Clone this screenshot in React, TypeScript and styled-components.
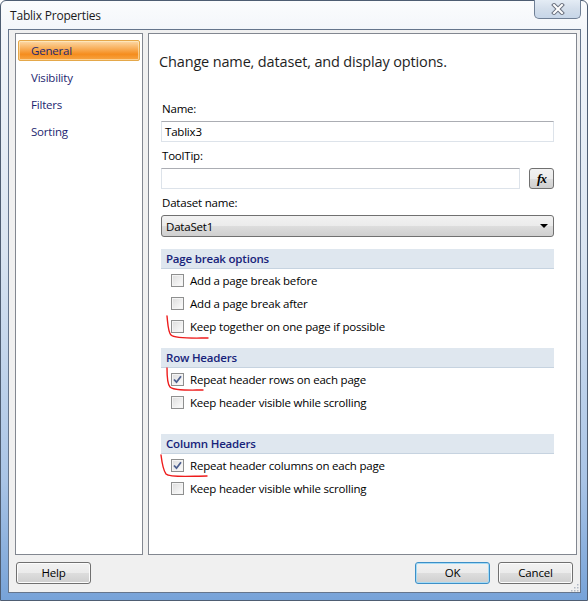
import { createGlobalStyle } from "styled-components";
import styled from "styled-components";

const GlobalStyle = createGlobalStyle`
    html, body {
        margin: 0;
        padding: 0;
        background: #ffffff;
    }
    * {
        box-sizing: border-box;
    }
`;

const UI_FONT = `"Open Sans", "Noto Sans", "Liberation Sans", sans-serif`;

const Window = styled.div`
    position: relative;
    width: 588px;
    height: 601px;
    display: flex;
    flex-direction: column;
    font-family: ${UI_FONT};
    font-size: 11.5px;
    letter-spacing: -0.2px;
    color: #000;
    border: 1px solid #4e5d72;
    border-radius: 6px 6px 0 0;
    background: linear-gradient(
        180deg,
        #fbfcfd 0px,
        #f3f6fa 30px,
        #d9e4f1 250px,
        #a9c4e6 480px,
        #76a2d8 601px
    );
`;

const TitleBar = styled.div`
    height: 28px;
    display: flex;
    align-items: flex-start;
    justify-content: space-between;
    padding-left: 9px;
`;

const TitleText = styled.div`
    margin-top: 6px;
    font-size: 12px;
    color: #1a1a1a;
`;

const CloseButton = styled.div`
    width: 47px;
    height: 19px;
    margin-top: -1px;
    margin-right: 6px;
    display: flex;
    align-items: center;
    justify-content: center;
    border: 1px solid #6f7f95;
    border-top: 0;
    border-radius: 0 0 5px 5px;
    background: linear-gradient(180deg, #e4ecf5 0%, #d3deeb 50%, #c7d6e8 100%);
`;

const Client = styled.div`
    flex: 1;
    margin: 0 6px 7px 7px;
    display: flex;
    flex-direction: column;
    background: #f0f0f0;
    border: 1px solid #65758c;
`;

const Body = styled.div`
    flex: 1;
    display: flex;
    gap: 5px;
    padding: 3px 3px 0 6px;
`;

const NavPanel = styled.div`
    width: 128px;
    background: #fff;
    border: 1px solid #828790;
    padding: 6px 2px;
    display: flex;
    flex-direction: column;
    gap: 6px;
`;

const NavItem = styled.div<{ selected?: boolean }>`
    height: 21px;
    display: flex;
    align-items: center;
    padding-left: 12px;
    color: #1d2670;
    border-radius: 2px;
    border: 1px solid ${(p) => (p.selected ? "#e5a84a" : "transparent")};
    background: ${(p) =>
        p.selected
            ? "linear-gradient(180deg, #fcd9a8 0%, #f9b463 35%, #f58d1e 70%, #f7a544 100%)"
            : "transparent"};
    box-shadow: ${(p) => (p.selected ? "inset 0 0 0 1px rgba(255,240,200,0.6)" : "none")};
`;

const ContentPanel = styled.div`
    flex: 1;
    background: #fff;
    border: 1px solid #828790;
    padding: 18px 22px 0 12px;
    display: flex;
    flex-direction: column;
`;

const Heading = styled.div`
    font-size: 14.5px;
    line-height: 20px;
    letter-spacing: -0.15px;
    color: #1e1e1e;
    margin-left: -2px;
    margin-bottom: 29px;
`;

const FieldLabel = styled.div`
    line-height: 16px;
    margin-left: 1px;
    margin-bottom: 4px;
`;

const FieldRow = styled.div`
    display: flex;
    align-items: center;
    gap: 9px;
    margin-bottom: 6px;
`;

const TextBox = styled.div`
    flex: 1;
    height: 21px;
    display: flex;
    align-items: center;
    padding-left: 3px;
    border: 1px solid #dde3ea;
    border-top-color: #abadb3;
    background: #fff;
`;

const FxButton = styled.div`
    width: 25px;
    height: 21px;
    display: flex;
    align-items: center;
    justify-content: center;
    border: 1px solid #707070;
    border-radius: 3px;
    background: linear-gradient(180deg, #f2f2f2 0%, #ebebeb 50%, #dddddd 51%, #cfcfcf 100%);
    font-family: "Liberation Serif", serif;
    font-style: italic;
    font-weight: bold;
    font-size: 13px;
    letter-spacing: -1px;
`;

const Select = styled.div`
    height: 22px;
    display: flex;
    align-items: center;
    justify-content: space-between;
    padding: 0 5px 0 4px;
    border: 1px solid #707070;
    border-radius: 3px;
    background: linear-gradient(180deg, #f2f2f2 0%, #ebebeb 50%, #dddddd 51%, #cfcfcf 100%);
    margin-bottom: 12px;
`;

const Arrow = styled.div`
    width: 0;
    height: 0;
    border-left: 4px solid transparent;
    border-right: 4px solid transparent;
    border-top: 4px solid #000;
`;

const Section = styled.div<{ gapAbove: number }>`
    margin-top: ${(p) => p.gapAbove}px;
    display: flex;
    flex-direction: column;
`;

const SectionHeader = styled.div`
    height: 20px;
    display: flex;
    align-items: center;
    padding-left: 5px;
    background: #dfe7ef;
    border-bottom: 1px solid #c6d3e0;
    color: #17237a;
    font-weight: 600;
`;

const CheckRow = styled.div`
    height: 23px;
    display: flex;
    align-items: center;
    gap: 6px;
    padding-left: 10px;
    padding-bottom: 1px;
`;

const Box = styled.div`
    width: 13px;
    height: 13px;
    display: flex;
    align-items: center;
    justify-content: center;
    border: 1px solid #8e8f8f;
    background: linear-gradient(135deg, #dcdcdc 0%, #f0f0f0 60%, #fdfdfd 100%);
    box-shadow: inset 0 0 0 1px #f4f4f4;
`;

const Footer = styled.div`
    height: 37px;
    display: flex;
    align-items: center;
    justify-content: space-between;
    padding: 0 7px 2px 7px;
`;

const ButtonGroup = styled.div`
    display: flex;
    gap: 8px;
`;

const Button = styled.div<{ isDefault?: boolean }>`
    width: 75px;
    height: 22px;
    display: flex;
    align-items: center;
    justify-content: center;
    border: 1px solid ${(p) => (p.isDefault ? "#3c8fc7" : "#707070")};
    border-radius: 3px;
    background: linear-gradient(180deg, #f2f2f2 0%, #ebebeb 50%, #dddddd 51%, #cfcfcf 100%);
    box-shadow: ${(p) => (p.isDefault ? "inset 0 0 0 1px #a6dbf5" : "inset 0 0 0 1px #fcfcfc")};
`;

const Grip = styled.svg`
    position: absolute;
    right: 8px;
    bottom: 8px;
`;

const Annotations = styled.svg`
    position: absolute;
    left: -1px;
    top: -1px;
    pointer-events: none;
`;

function CheckBox({ label, checked }: { label: string; checked?: boolean }) {
    return (
        <CheckRow>
            <Box>
                {checked && (
                    <svg width="11" height="11" viewBox="0 0 11 11">
                        <path
                            d="M2 5.5 L4.5 8.2 L9 2.2"
                            fill="none"
                            stroke="#4c5f8f"
                            strokeWidth="1.8"
                        />
                    </svg>
                )}
            </Box>
            {label}
        </CheckRow>
    );
}

export default function App() {
    return (
        <>
            <GlobalStyle />
            <Window>
                <TitleBar>
                    <TitleText>Tablix Properties</TitleText>
                    <CloseButton>
                        <svg width="14" height="12" viewBox="0 0 14 12">
                            <path
                                d="M3 2 L11 10 M11 2 L3 10"
                                stroke="#6b7280"
                                strokeWidth="4"
                                strokeLinecap="square"
                            />
                            <path
                                d="M3 2 L11 10 M11 2 L3 10"
                                stroke="#ffffff"
                                strokeWidth="2"
                                strokeLinecap="square"
                            />
                        </svg>
                    </CloseButton>
                </TitleBar>
                <Client>
                    <Body>
                        <NavPanel>
                            <NavItem selected>General</NavItem>
                            <NavItem>Visibility</NavItem>
                            <NavItem>Filters</NavItem>
                            <NavItem>Sorting</NavItem>
                        </NavPanel>
                        <ContentPanel>
                            <Heading>Change name, dataset, and display options.</Heading>
                            <FieldLabel>Name:</FieldLabel>
                            <FieldRow>
                                <TextBox>Tablix3</TextBox>
                            </FieldRow>
                            <FieldLabel>ToolTip:</FieldLabel>
                            <FieldRow>
                                <TextBox />
                                <FxButton>fx</FxButton>
                            </FieldRow>
                            <FieldLabel>Dataset name:</FieldLabel>
                            <Select>
                                DataSet1
                                <Arrow />
                            </Select>
                            <Section gapAbove={0}>
                                <SectionHeader>Page break options</SectionHeader>
                                <CheckBox label="Add a page break before" />
                                <CheckBox label="Add a page break after" />
                                <CheckBox label="Keep together on one page if possible" />
                            </Section>
                            <Section gapAbove={10}>
                                <SectionHeader>Row Headers</SectionHeader>
                                <CheckBox label="Repeat header rows on each page" checked />
                                <CheckBox label="Keep header visible while scrolling" />
                            </Section>
                            <Section gapAbove={20}>
                                <SectionHeader>Column Headers</SectionHeader>
                                <CheckBox label="Repeat header columns on each page" checked />
                                <CheckBox label="Keep header visible while scrolling" />
                            </Section>
                        </ContentPanel>
                    </Body>
                    <Footer>
                        <Button>Help</Button>
                        <ButtonGroup>
                            <Button isDefault>OK</Button>
                            <Button>Cancel</Button>
                        </ButtonGroup>
                    </Footer>
                </Client>
                <Grip width="8" height="8" viewBox="0 0 8 8">
                    <rect x="6" y="0" width="1.5" height="1.5" fill="#b0b8c4" />
                    <rect x="3" y="3" width="1.5" height="1.5" fill="#b0b8c4" />
                    <rect x="6" y="3" width="1.5" height="1.5" fill="#b0b8c4" />
                    <rect x="0" y="6" width="1.5" height="1.5" fill="#b0b8c4" />
                    <rect x="3" y="6" width="1.5" height="1.5" fill="#b0b8c4" />
                    <rect x="6" y="6" width="1.5" height="1.5" fill="#b0b8c4" />
                </Grip>
                <Annotations width="588" height="601" viewBox="0 0 588 601">
                    <g fill="none" stroke="#ee1c1c" strokeWidth="1.4" strokeLinecap="round">
                        <path d="M167 316 C168 325, 168 332, 171 335 C175 339, 195 338, 208 338" />
                        <path d="M167 368 C167 376, 167 384, 170 387 C174 391, 190 390, 203 390" />
                        <path d="M161 455 C162 463, 163 470, 166 474 C170 478, 192 476, 207 476" />
                    </g>
                </Annotations>
            </Window>
        </>
    );
}
